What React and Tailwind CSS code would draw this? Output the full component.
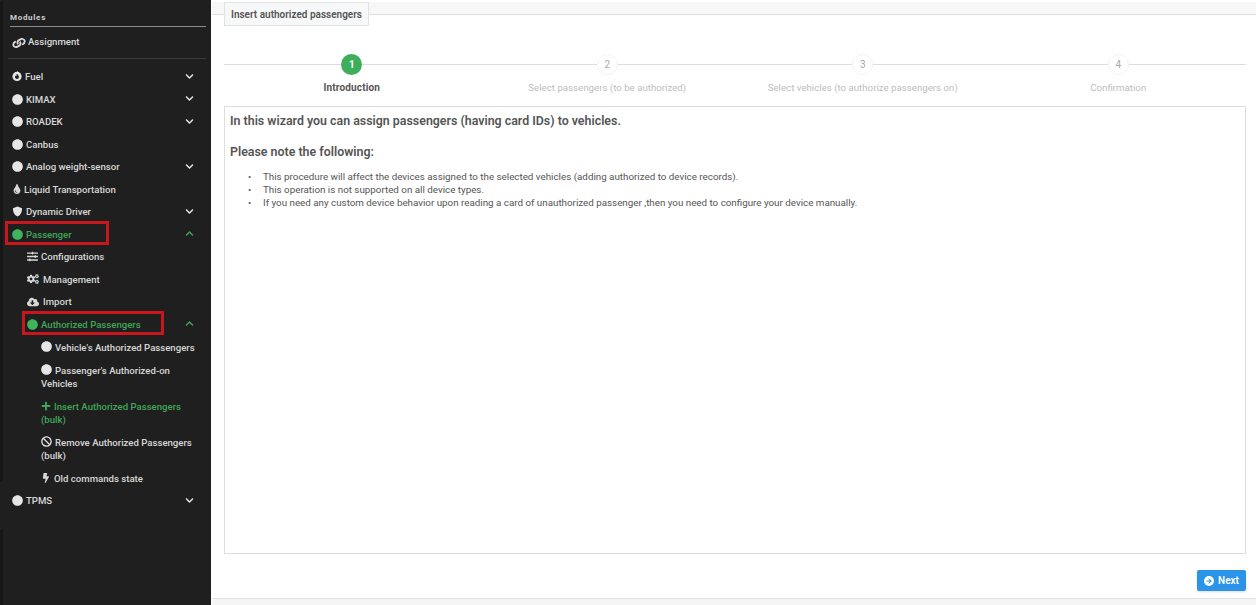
import React from 'react';
import { FaLink, FaTint, FaSlidersH, FaCogs, FaCloudDownloadAlt, FaPlus, FaBan, FaBolt, FaCircle, FaChevronDown, FaChevronUp, FaArrowRight } from 'react-icons/fa';

const font = "font-['Roboto','Noto_Sans',sans-serif]";

// white disc with a flame cut out, used by the Fuel item
const FuelIcon = () => (
  <svg viewBox="0 0 12 12" className="w-[10px] h-[10px] shrink-0 mr-[3px] -mt-[2px]">
    <circle cx="6" cy="6.5" r="5.5" fill="#e6e6e6" />
    <path d="M6.5 0 L8 2.5 L5 3 Z" fill="#e6e6e6" />
    <path d="M6.4 3.6c.3 1.2 2 1.7 2 3.5a2.4 2.4 0 0 1-4.8 0c0-.8.4-1.3.8-1.7.2.6.5.8.8.8.4-.7.2-1.6.2-2.6z" fill="#222" />
  </svg>
);

const ShieldIcon = () => (
  <svg viewBox="0 0 12 12" className="w-[11px] h-[11px] shrink-0 mr-[3px]">
    <path d="M6 .5 11 2.4c0 4-1.4 7.4-5 9.1C2.4 9.8 1 6.4 1 2.4Z" fill="#e6e6e6" />
  </svg>
);

const Dot = ({ active }) => (
  <FaCircle className={`text-[11px] shrink-0 mr-[3px] ${active ? 'text-[#3fb45c]' : 'text-[#e6e6e6]'}`} />
);

const Chevron = ({ up }) => (
  <span className="absolute right-[17px] top-[6px] text-[9px]">
    {up ? <FaChevronUp className="text-[#3fa658]" /> : <FaChevronDown className="text-[#e6e6e6]" />}
  </span>
);

const Row = ({ indent = 'pl-[12px]', icon, active, chevron, up, box, children }) => (
  <div className={`relative flex items-center min-h-[22.5px] ${indent} pr-[16px] text-[9.6px] leading-[13px] font-medium ${active ? 'text-[#3fa658]' : 'text-[#d8d8d8]'}`}>
    {icon}
    <span>{children}</span>
    {chevron && <Chevron up={up} />}
    {box}
  </div>
);

// sub items wrap with the second line under the icon, so the icon sits inline
const SubRow = ({ icon, active, children }) => (
  <div className={`py-[5px] pl-[41px] pr-[6px] text-[9.6px] leading-[13px] font-medium ${active ? 'text-[#3fa658]' : 'text-[#d8d8d8]'}`}>
    <span className="inline-block align-[-1px] mr-[3px]">{icon}</span>
    {children}
  </div>
);

const Sidebar = () => (
  <div className="flex h-full shrink-0 pt-[2px] bg-[#1f1f1f]">
    <div className="w-[3px] h-full flex flex-col">
      <div className="h-[480px] bg-[#161616]" />
      <div className="h-[48px]" />
      <div className="flex-1 bg-[#161616]" />
    </div>
    <aside className="w-[208px]">
      <div className="pl-[7px] pr-[5px]">
        <div className="h-[25px] flex items-end pb-[2px] text-[8px] font-bold tracking-[0.7px] text-[#cfcfcf] border-b border-[#8a8a8a]">Modules</div>
      </div>
      <div className="h-[31px] flex items-center pl-[10px] text-[9.6px] font-medium text-[#d8d8d8]">
        <FaLink className="text-[12px] mr-[3px] rotate-[20deg]" />
        Assignment
      </div>
      <div className="mx-[5px] border-t border-[#3a3a3a] mb-[6.5px]" />
      <div className="-ml-[3px]">
        <Row icon={<FuelIcon />} chevron>Fuel</Row>
        <Row icon={<Dot />} chevron>KIMAX</Row>
        <Row icon={<Dot />} chevron>ROADEK</Row>
        <Row icon={<Dot />}>Canbus</Row>
        <Row icon={<Dot />} chevron>Analog weight-sensor</Row>
        <Row icon={<FaTint className="text-[10px] mr-[2px]" />}>Liquid Transportation</Row>
        <Row icon={<ShieldIcon />} chevron>Dynamic Driver</Row>
        <Row icon={<Dot active />} active chevron up box={<div className="absolute left-[5px] -top-[2px] w-[104px] h-[24px] border-[3px] border-[#c8161d]" />}>Passenger</Row>
        <Row indent="pl-[27px]" icon={<FaSlidersH className="text-[11px] mr-[3px]" />}>Configurations</Row>
        <Row indent="pl-[27px]" icon={<FaCogs className="text-[12px] mr-[4px]" />}>Management</Row>
        <Row indent="pl-[27px]" icon={<FaCloudDownloadAlt className="text-[12px] mr-[4px]" />}>Import</Row>
        <Row indent="pl-[27px]" icon={<Dot active />} active chevron up box={<div className="absolute left-[22px] -top-[2px] w-[142px] h-[24px] border-[3px] border-[#c8161d]" />}>Authorized Passengers</Row>
        <SubRow icon={<FaCircle className="text-[11px] text-[#e6e6e6]" />}>Vehicle's Authorized Passengers</SubRow>
        <SubRow icon={<FaCircle className="text-[11px] text-[#e6e6e6]" />}>Passenger's Authorized-on<br />Vehicles</SubRow>
        <SubRow active icon={<FaPlus className="text-[10px] text-[#3fa658]" />}>Insert Authorized Passengers<br />(bulk)</SubRow>
        <SubRow icon={<FaBan className="text-[11px]" />}>Remove Authorized Passengers<br />(bulk)</SubRow>
        <SubRow icon={<FaBolt className="text-[10px]" />}>Old commands state</SubRow>
        <Row icon={<Dot />} chevron>TPMS</Row>
      </div>
    </aside>
  </div>
);

const steps = [
  { n: 1, label: 'Introduction', active: true },
  { n: 2, label: 'Select passengers (to be authorized)' },
  { n: 3, label: 'Select vehicles (to authorize passengers on)' },
  { n: 4, label: 'Confirmation' },
];

const Step = ({ n, label, active }) => (
  <div className="flex flex-col items-center">
    <div className="relative w-full h-[22px] flex justify-center">
      <div className="absolute left-0 right-0 top-[10px] border-t border-[#dddddd]" />
      <div className={`relative w-[21px] h-[21px] rounded-full flex items-center justify-center text-[10px] ${active ? 'bg-[#3fae5a] text-white font-bold' : 'bg-white border border-[#f4f4f4] text-[#a8a8a8]'}`}>{n}</div>
    </div>
    <div className={`mt-[5px] leading-[13px] ${active ? 'text-[10px] font-bold tracking-[0.15px] text-[#555]' : 'text-[9.7px] text-[#bdbdbd]'}`}>{label}</div>
  </div>
);

export default function App() {
  return (
    <div className={`flex h-[605px] w-[1256px] overflow-hidden bg-white ${font}`}>
      <Sidebar />
      <main className="flex-1 flex flex-col min-w-0 ml-px">
        <div className="h-[13px] mt-[2px] bg-[#f7f7f7] border-b border-[#dedede] relative shrink-0">
          <div className="absolute left-[12px] top-0 h-[24px] w-[145px] flex items-center justify-center bg-[#f7f8f9] border border-[#e2e2e2] text-[10px] font-semibold text-[#555]">Insert authorized passengers</div>
        </div>
        <div className="flex-1 flex flex-col pl-[12px] pr-[10px] pt-[39px]">
          <div className="grid grid-cols-4">
            {steps.map((s) => <Step key={s.n} {...s} />)}
          </div>
          <div className="mt-[12px] h-[448px] border border-[#dddddd] px-[5px] pt-[6px] text-[#555]">
            <h3 className="text-[12.4px] leading-[16px] font-semibold">In this wizard you can assign passengers (having card IDs) to vehicles.</h3>
            <h3 className="mt-[15px] text-[12.4px] leading-[16px] font-semibold">Please note the following:</h3>
            <ul className="mt-[10px] pl-[18px] text-[9.8px] leading-[13px] text-[#555]">
              <li className="flex"><span className="w-[15px] shrink-0">•</span>This procedure will affect the devices assigned to the selected vehicles (adding authorized to device records).</li>
              <li className="flex"><span className="w-[15px] shrink-0">•</span>This operation is not supported on all device types.</li>
              <li className="flex"><span className="w-[15px] shrink-0">•</span>If you need any custom device behavior upon reading a card of unauthorized passenger ,then you need to configure your device manually.</li>
            </ul>
          </div>
          <div className="flex justify-end mt-[16px]">
            <button className="h-[21px] w-[49px] rounded-[2px] bg-[#2b94e8] text-white text-[10px] font-semibold flex items-center justify-center gap-[4px] shadow-sm">
              <span className="w-[10px] h-[10px] rounded-full bg-white flex items-center justify-center">
                <FaArrowRight className="text-[6px] text-[#2b94e8]" />
              </span>
              Next
            </button>
          </div>
        </div>
        <div className="h-[7px] bg-[#f5f5f5] border-t border-[#e2e2e2] shrink-0" />
      </main>
    </div>
  );
}
